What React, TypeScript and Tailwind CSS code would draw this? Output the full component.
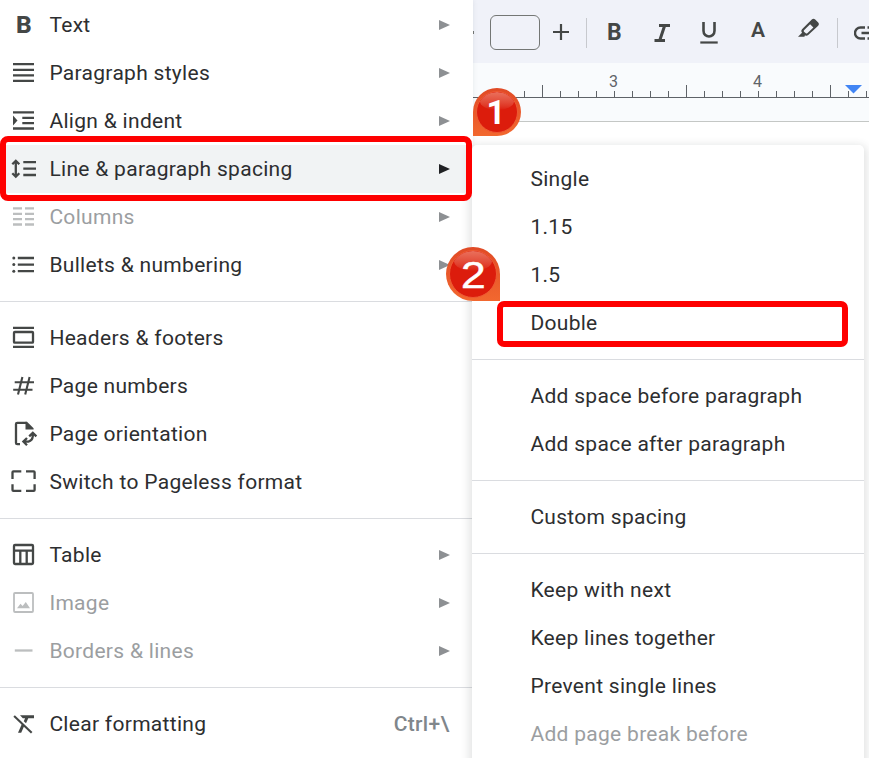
import React from 'react';

interface MenuItem {
  label: string;
  icon: React.ReactNode;
  disabled?: boolean;
  active?: boolean;
  submenu?: boolean;
  shortcut?: string;
}

const Icon: React.FC<{ children: React.ReactNode }> = ({ children }) => (
  <svg className="h-7 w-7 shrink-0" viewBox="0 0 28 28" fill="none" stroke="currentColor" strokeWidth="2.3">
    {children}
  </svg>
);

const menuGroups: MenuItem[][] = [
  [
    {
      label: 'Text',
      submenu: true,
      icon: <span className="w-7 pl-[6px] text-[24.5px] leading-7 font-extrabold tracking-normal">B</span>,
    },
    {
      label: 'Paragraph styles',
      submenu: true,
      icon: <Icon><path d="M3 5.1H24M3 10.9H24M3 16.4H24M3 21.8H24" /></Icon>,
    },
    {
      label: 'Align & indent',
      submenu: true,
      icon: (
        <Icon>
          <path d="M3 5.4H24M12.3 10.8H24M12.3 16.1H24M3 21.5H24" />
          <path d="M3 8.4L7.5 13.5L3 18.6Z" fill="currentColor" stroke="none" />
        </Icon>
      ),
    },
    {
      label: 'Line & paragraph spacing',
      submenu: true,
      active: true,
      icon: (
        <Icon>
          <path d="M5.8 7V20M2.3 9.3L5.8 5.8L9.3 9.3M2.3 18.2L5.8 21.7L9.3 18.2M13.3 7.2H26M13.3 13.6H26M13.3 20H26" />
        </Icon>
      ),
    },
    {
      label: 'Columns',
      submenu: true,
      disabled: true,
      icon: (
        <Icon>
          <path d="M3 5.4H12M15 5.4H24M3 10.8H12M15 10.8H24M3 16.1H12M15 16.1H24M3 21.5H12M15 21.5H24" />
        </Icon>
      ),
    },
    {
      label: 'Bullets & numbering',
      submenu: true,
      icon: (
        <Icon>
          <path d="M7.8 7H24M7.8 13.6H24M7.8 20.2H24" />
          <g fill="currentColor" stroke="none">
            <circle cx="3.8" cy="7" r="1.5" />
            <circle cx="3.8" cy="13.6" r="1.5" />
            <circle cx="3.8" cy="20.2" r="1.5" />
          </g>
        </Icon>
      ),
    },
  ],
  [
    {
      label: 'Headers & footers',
      icon: <Icon><path d="M3 3.8H24M3 22.8H24" /><rect x="4" y="8" width="19" height="10.7" rx="0.8" /></Icon>,
    },
    {
      label: 'Page numbers',
      icon: <Icon><path d="M12.4 5L8 22.5M19.6 5L15.2 22.5M4.7 10.2H24M3.2 17.8H22.5" strokeWidth="2.1" /></Icon>,
    },
    {
      label: 'Page orientation',
      icon: (
        <Icon>
          <path d="M10 24.2H7.3Q6 24.2 6 22.9V4.1Q6 2.8 7.3 2.8H16.5" />
          <path d="M15.5 1.7H17L23.6 8.2V9.6H15.5Z" fill="currentColor" stroke="none" />
          <path d="M22.8 14V16.2Q22.4 20.6 18.4 21.6H14.2M19.2 16.4L22.8 12.9L26.4 16.4M17 18L13.4 21.6L17 25.2" />
        </Icon>
      ),
    },
    {
      label: 'Switch to Pageless format',
      icon: (
        <Icon>
          <path d="M2.5 11V4.3Q2.5 3.4 3.4 3.4H11.3M16 3.4H23.7Q24.6 3.4 24.6 4.3V11M24.6 16.3V22Q24.6 22.9 23.7 22.9H16M11.3 22.9H3.4Q2.5 22.9 2.5 22V16.3" />
        </Icon>
      ),
    },
  ],
  [
    {
      label: 'Table',
      submenu: true,
      icon: <Icon><rect x="4" y="4" width="19" height="19" rx="1" /><path d="M4 9.6H23M10.3 9.6V23M16.7 9.6V23" /></Icon>,
    },
    {
      label: 'Image',
      submenu: true,
      disabled: true,
      icon: (
        <Icon>
          <rect x="4" y="4" width="19" height="19" rx="1" strokeWidth="1.8" />
          <path d="M7 19.2L10.5 14.8L12.6 17L15.8 13L20 19.2Z" fill="currentColor" stroke="none" />
        </Icon>
      ),
    },
    {
      label: 'Borders & lines',
      submenu: true,
      disabled: true,
      icon: <Icon><path d="M4.8 13.5H22.5" /></Icon>,
    },
  ],
  [
    {
      label: 'Clear formatting',
      shortcut: 'Ctrl+\\',
      icon: (
        <Icon>
          <path d="M4.1 5.9L21.7 22.8" strokeWidth="2.1" />
          <path d="M10 5.2H24V8.2H18.3L16 13.3L13.8 11.2L15.1 8.2H12.8ZM12.1 13.6L14.3 15.8L11.2 22.8H8Z" fill="currentColor" stroke="none" />
        </Icon>
      ),
    },
  ],
];

const spacingGroups: { label: string; disabled?: boolean }[][] = [
  [{ label: 'Single' }, { label: '1.15' }, { label: '1.5' }, { label: 'Double' }],
  [{ label: 'Add space before paragraph' }, { label: 'Add space after paragraph' }],
  [{ label: 'Custom spacing' }],
  [
    { label: 'Keep with next' },
    { label: 'Keep lines together' },
    { label: 'Prevent single lines' },
    { label: 'Add page break before', disabled: true },
  ],
];

const Divider = () => <div className="my-3 h-px bg-[#dadce0]" />;

const FormatMenu = () => (
  <nav className="relative z-10 h-full w-[473px] shrink-0 bg-white pt-px shadow-[0_0_5px_rgba(60,64,67,0.1)]">
    {menuGroups.map((group, index) => (
      <React.Fragment key={index}>
        {index > 0 && <Divider />}
        {group.map((item) => (
          <div
            key={item.label}
            className={`flex h-12 items-center pr-[23.5px] pl-[10px] ${item.active ? 'bg-[#f1f3f4]' : ''} ${
              item.disabled ? 'text-[#9b9ea1]' : 'text-[#2d2e30]'
            }`}
          >
            <span className={`flex ${item.disabled ? 'text-[#bcbebf]' : 'text-[#444746]'}`}>{item.icon}</span>
            <span className="ml-[11.4px] flex-1 whitespace-nowrap">{item.label}</span>
            {item.shortcut && <span className="font-medium text-[#80868b]">{item.shortcut}</span>}
            {item.submenu && (
              <svg
                className={`h-[10px] w-[11px] ${item.active ? 'text-[#202124]' : 'text-[#8d9093]'}`}
                viewBox="0 0 11 10"
                fill="currentColor"
              >
                <path d="M0 0L11 5L0 10Z" />
              </svg>
            )}
          </div>
        ))}
      </React.Fragment>
    ))}
  </nav>
);

const Toolbar = () => (
  <div className="flex h-[63px] shrink-0 items-start overflow-hidden bg-[#f0f2f9] text-[#444746] *:shrink-0">
    <div className="mt-[31px] h-[3px] w-px bg-[#747775]" />
    <div className="mt-[15px] ml-[16px] h-[35px] w-[50px] rounded-[6px] border border-[#747775]" />
    <svg className="mt-[24px] ml-[13px] h-4 w-4" viewBox="0 0 16 16" stroke="currentColor" strokeWidth="2.2">
      <path d="M0 8H16M8 0V16" />
    </svg>
    <div className="mt-[18px] ml-[17px] h-[30px] w-px bg-[#c7c9ce]" />
    <span className="mt-[19px] ml-[20px] w-4 text-[23px] leading-7 font-bold tracking-normal">B</span>
    <svg className="mt-[24px] ml-[31px] h-[18px] w-[17px]" viewBox="0 0 17 18" fill="none" stroke="currentColor" strokeWidth="3">
      <path d="M5 1.5H16M0.5 16.5H11M10.7 1.5L5.7 16.5" />
    </svg>
    <svg className="mt-[22px] ml-[29px] h-[22px] w-[18px]" viewBox="0 0 18 22" fill="none" stroke="currentColor" strokeWidth="2.6">
      <path d="M3.5 0V8.8C3.5 16.4 14.5 16.4 14.5 8.8V0" />
      <path d="M0.3 20.5H17.7" strokeWidth="2.2" />
    </svg>
    <span className="mt-[16px] ml-[33px] w-[15px] text-[21px] leading-7 font-semibold tracking-normal">A</span>
    <svg className="mt-[18px] ml-[32px] h-5 w-[22px]" viewBox="0 0 22 20" fill="currentColor">
      <path
        fillRule="evenodd"
        d="M13.8 1.6Q15.5 0 17.2 1.6L20.2 4.5Q21.8 6.1 20.2 7.8L10.2 17.1Q8.6 18.4 7 17.2L6.4 18.8H0L4 14.7Q2.4 13 4 11.2ZM12.1 6.3L6 12.2Q5.4 13 6 13.7L7.8 15.3Q8.6 15.8 9.3 15.2L15.4 9.5Z"
      />
    </svg>
    <div className="mt-[18px] ml-[17px] h-[30px] w-px bg-[#c7c9ce]" />
    <svg className="mt-[26px] ml-[16px] h-[14px] w-[24px]" viewBox="0 0 24 14" fill="none" stroke="currentColor" strokeWidth="2.4">
      <path d="M11 1.5H6.5A5.3 5.3 0 0 0 6.5 12.5H11M7.5 7H17M13.5 1.5H18A5.3 5.3 0 0 1 18 12.5H13.5" />
    </svg>
  </div>
);

// One inch is 144px wide and split into eighths
const ticks = Array.from({ length: 20 }, (_, i) => ({ x: 51.5 + i * 18, tall: i % 8 === 1 }));

const Ruler = () => (
  <svg className="h-[59px] w-[396px] shrink-0 border-b border-[#c4c7c5] bg-[#f9fbfd]" viewBox="0 0 396 58">
    <path d="M0 34.5H396" stroke="#5f6368" />
    {ticks.map(({ x, tall }) => (
      <path key={x} d={tall ? `M${x} 22V34` : `M${x} 28V34`} stroke="#5f6368" />
    ))}
    <g className="text-[16px] tracking-normal" fill="#5f6368" textAnchor="middle">
      <text x="140.5" y="24">3</text>
      <text x="284.5" y="24">4</text>
    </g>
    <path d="M372 22H389L380.5 30.5Z" fill="#4285f4" />
  </svg>
);

const SpacingMenu = () => (
  <div className="mt-[23px] -ml-px h-[640px] w-[392px] rounded-t-[5px] bg-white pt-[10px] shadow-[0_3px_9px_3px_rgba(60,64,67,0.14)]">
    {spacingGroups.map((group, index) => (
      <React.Fragment key={index}>
        {index > 0 && <Divider />}
        {group.map((item) => (
          <div
            key={item.label}
            className={`flex h-12 items-center pl-[58.4px] whitespace-nowrap ${item.disabled ? 'text-[#9b9ea1]' : 'text-[#2d2e30]'}`}
          >
            {item.label}
          </div>
        ))}
      </React.Fragment>
    ))}
  </div>
);

const StepBadge: React.FC<{ className: string; children: React.ReactNode }> = ({ className, children }) => (
  <div
    className={`absolute z-30 bg-linear-to-b from-[#e04a26] to-[#f2682f] p-[3px] leading-none tracking-normal text-white ${className}`}
  >
    <div className="relative flex h-full w-full items-center justify-center overflow-hidden rounded-full border border-[#ee5a34] bg-[#dc1c0c]">
      <div className="absolute top-0 left-[8%] h-[44%] w-[84%] rounded-[50%] bg-linear-to-b from-[#e9705c] to-[#dc1c0c]" />
      {children}
    </div>
  </div>
);

const App: React.FC = () => {
  return (
    <div className="relative flex h-[758px] w-[869px] overflow-hidden bg-white font-[Roboto,sans-serif] text-[21px] leading-7 tracking-[0.3px] antialiased">
      <FormatMenu />
      <div className="relative flex min-w-0 flex-1 flex-col">
        <Toolbar />
        <Ruler />
        <div className="relative z-20">
          <SpacingMenu />
        </div>
      </div>

      <div className="absolute top-[136px] left-0 z-20 h-[65px] w-[472px] rounded-[8px] border-[6px] border-[#fe0000]" />
      <div className="absolute top-[301px] left-[497px] z-20 h-[46px] w-[351px] rounded-[7px] border-[6px] border-[#fe0000]" />
      <StepBadge className="top-[88px] left-[473px] h-12 w-12 rounded-full rounded-bl-none">
        <span className="relative -left-px text-[33px] font-bold">1</span>
      </StepBadge>
      <StepBadge className="top-[247px] left-[446px] h-[54px] w-[54px] rounded-full rounded-br-none">
        <span className="relative top-px scale-x-120 font-['Liberation_Sans',sans-serif] text-[37px] [-webkit-text-stroke:0.5px_white]">2</span>
      </StepBadge>
    </div>
  );
};

export default App;
